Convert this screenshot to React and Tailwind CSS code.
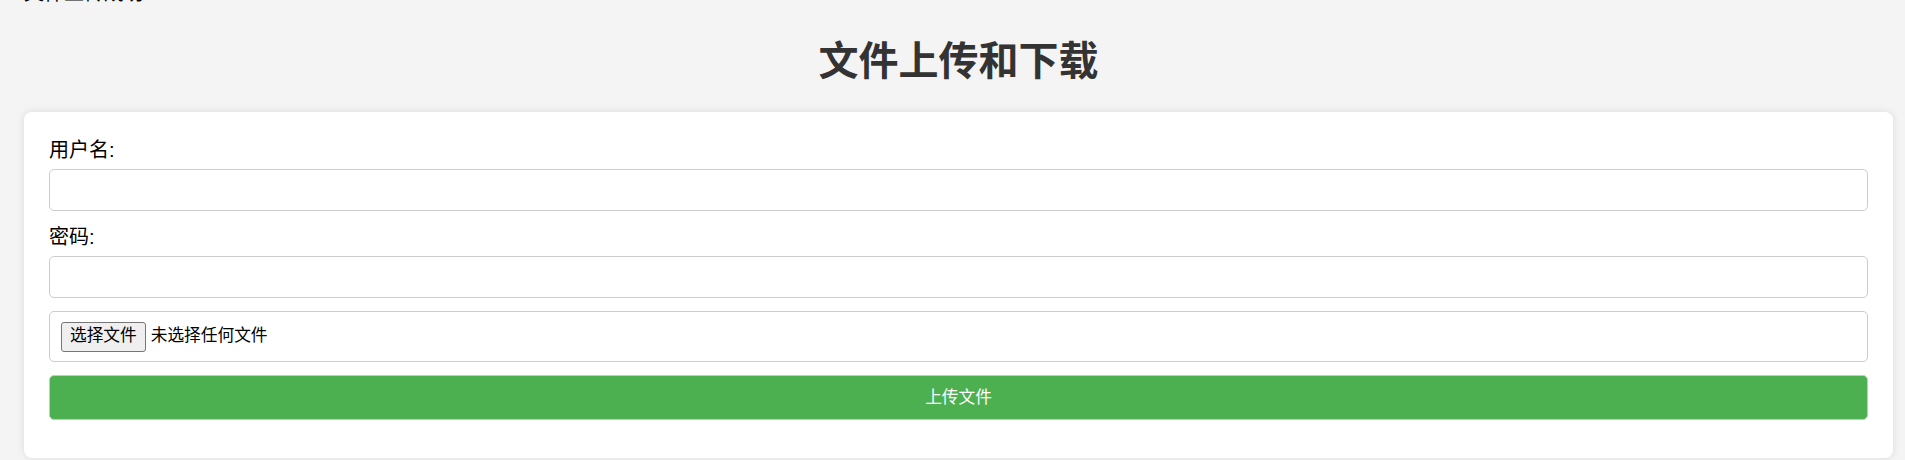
export default function App() {
  const font = { fontFamily: '"Liberation Sans", "Noto Sans CJK SC", sans-serif' };
  return (
    <div className="min-h-[460px] overflow-hidden bg-[#f4f4f4] pl-[24px] pr-[12px] text-black" style={font}>
      <div className="-mt-[20px] h-[26px] text-[20px] leading-[26px]">文件上传成功</div>
      <h1 className="mt-[31px] mb-[27px] text-center text-[40px] font-bold leading-[48px] text-[#333]">
        文件上传和下载
      </h1>
      <div className="rounded-[8px] bg-white p-[25px] shadow-[0_0_8px_rgba(0,0,0,0.1)]">
        <div className="mb-[13px]">
          <label className="mb-[6px] block text-[20px] leading-[26px]">用户名:</label>
          <input type="text" className="block h-[42px] w-full rounded-[5px] border border-[#ccc] bg-white px-[12px] outline-none" />
        </div>
        <div className="mb-[13px]">
          <label className="mb-[6px] block text-[20px] leading-[26px]">密码:</label>
          <input type="password" className="block h-[42px] w-full rounded-[5px] border border-[#ccc] bg-white px-[12px] outline-none" />
        </div>
        <div className="mb-[13px] flex h-[51px] items-center rounded-[5px] border border-[#ccc] pl-[11px]">
          <span className="flex h-[30px] items-center rounded-[3px] border border-[#767676] bg-[#efefef] px-[8px] text-[16.7px] leading-none text-black">
            选择文件
          </span>
          <span className="ml-[5px] text-[16.7px] leading-none">未选择任何文件</span>
        </div>
        <div className="mb-[13px]">
          <button className="flex h-[45px] w-full items-center justify-center rounded-[5px] border border-[#c8c8c8] bg-[#4caf50] text-[16.7px] text-white">
            上传文件
          </button>
        </div>
      </div>
    </div>
  );
}
